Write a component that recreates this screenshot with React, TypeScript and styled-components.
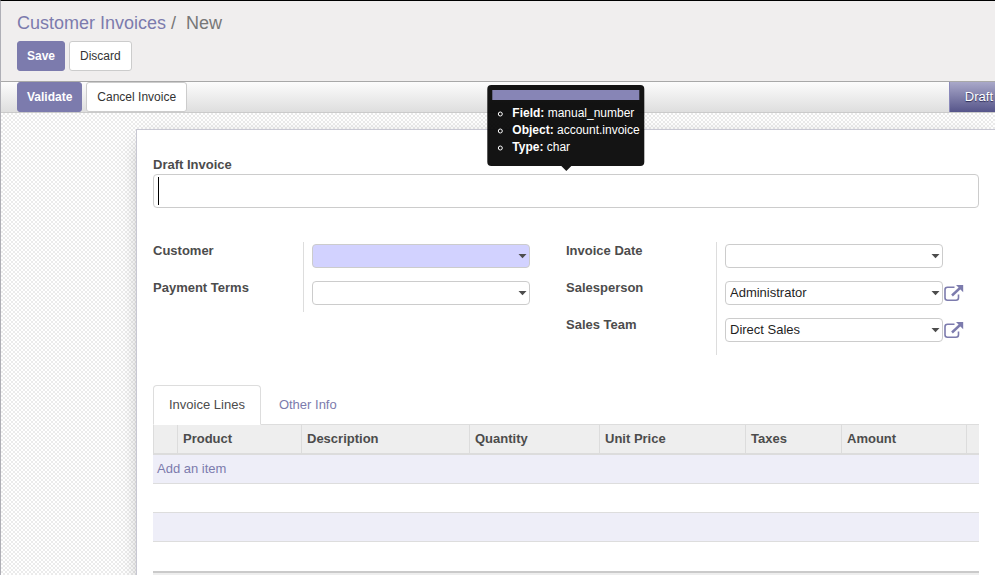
import React from "react";
import styled, { createGlobalStyle } from "styled-components";

const GlobalStyle = createGlobalStyle`
  *, *::before, *::after { box-sizing: border-box; }
  html, body, #root { height: 100%; }
  body {
    margin: 0;
    overflow: hidden;
    background: #ffffff;
    color: #4c4c4c;
    font: 13px/18px "Liberation Sans", Arial, sans-serif;
  }
  button, input, select { font-family: inherit; }
  a { color: #7c7bad; text-decoration: none; }
`;

const Page = styled.div`
  display: flex;
  flex-direction: column;
  height: 100vh;
  overflow: hidden;
  border-top: 1px solid #000000;
  border-left: 1px solid #afafb6;
`;

const ControlPanel = styled.header`
  padding: 10px 16px;
  background: #f0eeee;
  border-bottom: 1px solid #a8a8a8;
`;

const Breadcrumb = styled.nav`
  display: flex;
  margin-bottom: 6px;
  font-size: 18px;
  line-height: 24px;
  color: #777777;
`;

const Separator = styled.span`
  padding: 0 10px 0 5px;
`;

const ButtonRow = styled.div`
  display: flex;
  gap: 4px;
`;

const Button = styled.button<{ $primary?: boolean }>`
  height: 30px;
  padding: 0 ${(p) => (p.$primary ? "9px" : "10px")};
  border: 1px solid ${(p) => (p.$primary ? "#7c7bad" : "#cccccc")};
  border-radius: 3px;
  background: ${(p) => (p.$primary ? "#7c7bad" : "#ffffff")};
  color: ${(p) => (p.$primary ? "#ffffff" : "#333333")};
  font-size: 12px;
  font-weight: ${(p) => (p.$primary ? 700 : 400)};
  line-height: 18px;
`;

const StatusBar = styled.div`
  position: relative;
  z-index: 1;
  display: flex;
  justify-content: space-between;
  padding-left: 16px;
  background: linear-gradient(to bottom, #fcfcfc, #dedede);
  border-bottom: 1px solid #cacaca;
`;

const StatusStep = styled.div`
  padding: 0 2px 0 15px;
  border-left: 1px solid #8a89ba;
  background: linear-gradient(to bottom, #a9a8c9, #56558a);
  color: #ffffff;
  line-height: 30px;
  text-shadow: 0 1px 1px #2b2b55;
`;

const SheetBackground = styled.main`
  flex: 1;
  min-height: 0;
  padding: 16px 0 0 135px;
  background: repeating-conic-gradient(#ebebeb 0% 25%, #ffffff 0% 50%) 0 0 / 4px 4px;
`;

const Sheet = styled.form`
  min-height: 100%;
  padding: 26px 16px 16px;
  background: #ffffff;
  border: solid #c8c8d3;
  border-width: 1px 0 0 1px;
  box-shadow: 0 5px 20px -10px rgba(0, 0, 0, 0.6);
`;

const Label = styled.label`
  display: block;
  font-weight: 700;
`;

const TitleField = styled.div`
  position: relative;
  margin-bottom: 34px;
`;

const TitleInput = styled.input`
  display: block;
  width: 100%;
  height: 34px;
  padding: 0 5px;
  border: 1px solid #cccccc;
  border-radius: 4px;
  outline: none;
  background: #ffffff;
  caret-color: transparent;
  color: #1f1f1f;
  font-size: 24px;
`;

const TextCursor = styled.span`
  position: absolute;
  top: 3px;
  left: 5px;
  width: 1px;
  height: 28px;
  background: #000000;
`;

const Tooltip = styled.div`
  position: absolute;
  z-index: 2;
  bottom: calc(100% + 8px);
  left: 50%;
  transform: translateX(-50%);
  width: max-content;
  padding: 5px 5px 10px;
  border-radius: 4px;
  background: rgba(0, 0, 0, 0.92);
  color: #ffffff;
  font-size: 12px;
  line-height: 17px;

  &::after {
    content: "";
    position: absolute;
    top: 100%;
    left: 50%;
    margin-left: -5px;
    border: solid transparent;
    border-width: 5px 5px 0;
    border-top-color: #141414;
  }
`;

const TooltipBar = styled.div`
  height: 10px;
  margin-bottom: 5px;
  background: #8785b6;
`;

const TooltipList = styled.ul`
  margin: 0;
  padding: 0 0 0 20px;
  list-style: circle;
`;

const Groups = styled.div`
  display: grid;
  grid-template-columns: 1fr 1fr;
  align-items: start;
`;

const Group = styled.div`
  display: grid;
  grid-template-columns: 150px 1fr;
`;

const LabelColumn = styled.div`
  display: grid;
  gap: 19px;
  align-content: start;
`;

const ControlColumn = styled.div`
  display: grid;
  gap: 13px;
  padding: 2px 0 7px 8px;
  border-left: 1px solid #dddddd;
`;

const RightControlColumn = styled(ControlColumn)`
  padding-bottom: 13px;
`;

const ControlRow = styled.div`
  display: grid;
  grid-template-columns: 1fr 35px;
  gap: 1px;
  align-items: center;
`;

const ControlBox = styled.div`
  position: relative;
`;

const Select = styled.select<{ $required?: boolean }>`
  display: block;
  appearance: none;
  width: 100%;
  height: 24px;
  padding: 0 20px 2px 4px;
  border: 1px solid #cccccc;
  border-radius: 4px;
  background: ${(p) => (p.$required ? "#d2d2ff" : "#ffffff")};
  color: #1f1f1f;
  font-size: 13px;
`;

const Caret = styled.svg`
  position: absolute;
  top: 10px;
  right: 3px;
  pointer-events: none;
`;

const LinkButton = styled.button`
  display: block;
  width: 20px;
  height: 20px;
  padding: 0;
  border: 0;
  background: none;
  color: #7c7bad;
`;

const Tabs = styled.div`
  display: flex;
  margin-top: 30px;
  border-bottom: 1px solid #dddddd;
`;

const Tab = styled.button<{ $active?: boolean }>`
  height: 40px;
  margin-bottom: -1px;
  padding: 0 15px;
  border: 1px solid;
  border-color: ${(p) => (p.$active ? "#dddddd #dddddd #ffffff" : "transparent")};
  border-radius: 4px 4px 0 0;
  background: ${(p) => (p.$active ? "#ffffff" : "transparent")};
  color: ${(p) => (p.$active ? "#4c4c4c" : "#7c7bad")};
  font-size: 13px;
  line-height: 18px;

  & + & { margin-left: 2px; }
`;

const Table = styled.table`
  width: 100%;
  table-layout: fixed;
  border-collapse: separate;
  border-spacing: 0;
`;

const HeadCell = styled.th`
  height: 30px;
  padding: 0 5px;
  border-left: 1px solid #dcdcdc;
  border-bottom: 2px solid #dcdcdc;
  background: #eeeeee;
  text-align: left;
`;

const Cell = styled.td<{ $striped?: boolean }>`
  height: 29px;
  padding: 0 4px 1px;
  border-bottom: 1px solid #dddddd;
  background: ${(p) => (p.$striped ? "#eeeef8" : "#ffffff")};
`;

const LastCell = styled(Cell)`
  border-bottom: 0;
`;

const FootCell = styled.td`
  height: 30px;
  border-top: 2px solid #cacaca;
  background: #eeeeee;
`;

const columns = [
  { label: "", width: 24 },
  { label: "Product", width: 124 },
  { label: "Description", width: 168 },
  { label: "Quantity", width: 130 },
  { label: "Unit Price", width: 146 },
  { label: "Taxes", width: 96 },
  { label: "Amount", width: 125 },
  { label: "", width: 13 },
];

const totalWidth = columns.reduce((sum, c) => sum + c.width, 0);

function ExternalLinkIcon() {
  return (
    <svg width="20" height="20" viewBox="0 0 20 20" fill="none" aria-hidden="true">
      <path
        d="M10.5 4.2H3.5Q1 4.2 1 6.7V14.8Q1 17.3 3.5 17.3H12Q14.5 17.3 14.5 14.8V11.5"
        stroke="currentColor"
        strokeWidth="1.6"
      />
      <path d="M8 12.5L16 5" stroke="currentColor" strokeWidth="2.4" />
      <path d="M12 2H19.2V9.2Z" fill="currentColor" />
    </svg>
  );
}

type FieldProps = { id: string; value?: string; required?: boolean; linked?: string };

function SelectField({ id, value = "", required, linked }: FieldProps) {
  return (
    <ControlRow>
      <ControlBox>
        <Select id={id} $required={required} defaultValue={value}>
          <option value={value}>{value}</option>
        </Select>
        <Caret width="9" height="5" viewBox="0 0 9 5" aria-hidden="true">
          <path d="M0.5 0H8.5L4.5 4.3Z" fill="#4c4c4c" />
        </Caret>
      </ControlBox>
      {linked && (
        <LinkButton type="button" aria-label={linked}>
          <ExternalLinkIcon />
        </LinkButton>
      )}
    </ControlRow>
  );
}

export default function App() {
  return (
    <>
      <GlobalStyle />
      <Page>
        <ControlPanel>
          <Breadcrumb>
            <a href="#invoices">Customer Invoices</a>
            <Separator>/</Separator>
            <span>New</span>
          </Breadcrumb>
          <ButtonRow>
            <Button $primary>Save</Button>
            <Button>Discard</Button>
          </ButtonRow>
        </ControlPanel>
        <StatusBar>
          <ButtonRow>
            <Button $primary>Validate</Button>
            <Button>Cancel Invoice</Button>
          </ButtonRow>
          <StatusStep>Draft</StatusStep>
        </StatusBar>
        <SheetBackground>
          <Sheet>
            <Label htmlFor="number">Draft Invoice</Label>
            <TitleField>
              <TitleInput id="number" type="text" aria-describedby="number-tip" />
              <TextCursor aria-hidden="true" />
              <Tooltip id="number-tip" role="tooltip">
                <TooltipBar />
                <TooltipList>
                  <li><b>Field:</b> manual_number</li>
                  <li><b>Object:</b> account.invoice</li>
                  <li><b>Type:</b> char</li>
                </TooltipList>
              </Tooltip>
            </TitleField>
            <Groups>
              <Group>
                <LabelColumn>
                  <Label htmlFor="customer">Customer</Label>
                  <Label htmlFor="terms">Payment Terms</Label>
                </LabelColumn>
                <ControlColumn>
                  <SelectField id="customer" required />
                  <SelectField id="terms" />
                </ControlColumn>
              </Group>
              <Group>
                <LabelColumn>
                  <Label htmlFor="date">Invoice Date</Label>
                  <Label htmlFor="salesperson">Salesperson</Label>
                  <Label htmlFor="team">Sales Team</Label>
                </LabelColumn>
                <RightControlColumn>
                  <SelectField id="date" />
                  <SelectField id="salesperson" value="Administrator" linked="Open salesperson" />
                  <SelectField id="team" value="Direct Sales" linked="Open sales team" />
                </RightControlColumn>
              </Group>
            </Groups>
            <Tabs role="tablist">
              <Tab type="button" role="tab" aria-selected="true" $active>Invoice Lines</Tab>
              <Tab type="button" role="tab" aria-selected="false">Other Info</Tab>
            </Tabs>
            <Table>
              <colgroup>
                {columns.map((c, i) => (
                  <col key={i} style={{ width: `${(c.width / totalWidth) * 100}%` }} />
                ))}
              </colgroup>
              <thead>
                <tr>
                  {columns.map((c, i) => (
                    <HeadCell key={i} scope="col">{c.label}</HeadCell>
                  ))}
                </tr>
              </thead>
              <tbody>
                <tr>
                  <Cell colSpan={8} $striped><a href="#add">Add an item</a></Cell>
                </tr>
                <tr><Cell colSpan={8} /></tr>
                <tr><Cell colSpan={8} $striped /></tr>
                <tr><LastCell colSpan={8} /></tr>
              </tbody>
              <tfoot>
                <tr><FootCell colSpan={8} /></tr>
              </tfoot>
            </Table>
          </Sheet>
        </SheetBackground>
      </Page>
    </>
  );
}
